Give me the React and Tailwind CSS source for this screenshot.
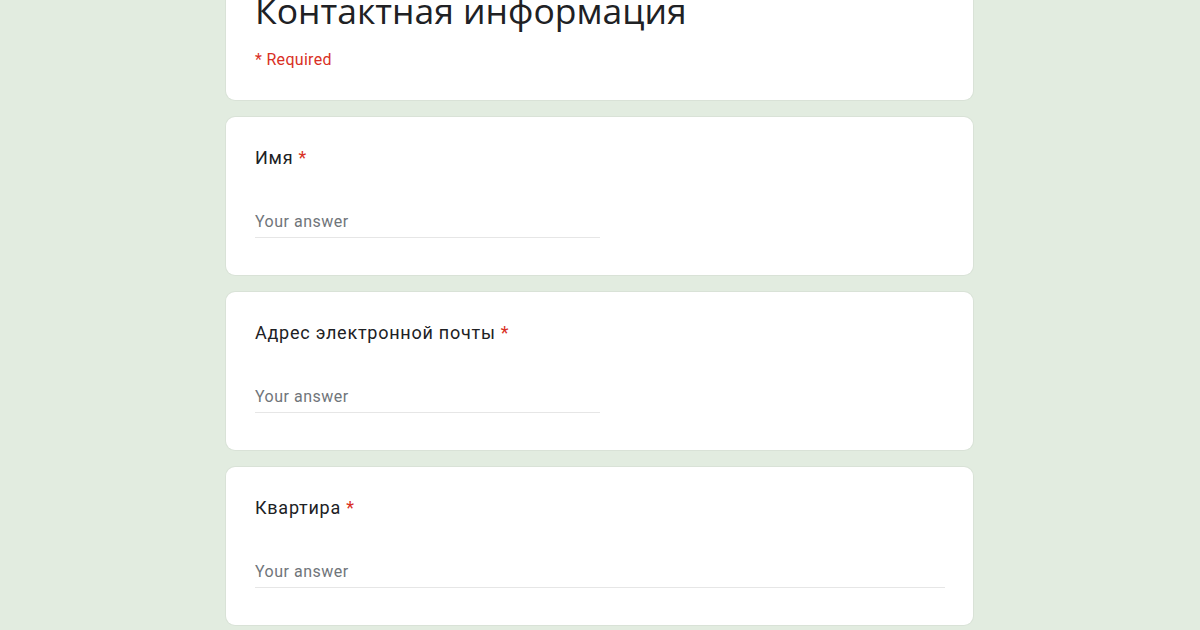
export default function App() {
  const fields = [
    { label: "Имя", full: false },
    { label: "Адрес электронной почты", full: false },
    { label: "Квартира", full: true },
  ];
  return (
    <div className="w-[1200px] h-[630px] overflow-hidden bg-[#e2ece0]" style={{ fontFamily: "Roboto, 'Noto Sans', sans-serif" }}>
      <div className="w-[747px] ml-[226px] -mt-[40px] flex flex-col gap-[17px]">
        <div className="bg-white rounded-[9px] shadow-[0_0_0_1px_rgba(0,0,0,0.04)] pl-[29px] pr-6 pt-[28px] pb-[28px]">
          <div className="text-[35.5px] leading-[44px] text-[#202124]" style={{ fontFamily: "'Open Sans', sans-serif" }}>
            Контактная информация
          </div>
          <div className="mt-[16px] text-[16px] leading-[24px] text-[#d93025] tracking-[0.3px]">* Required</div>
        </div>
        {fields.map((f) => (
          <div key={f.label} className="bg-white rounded-[9px] shadow-[0_0_0_1px_rgba(0,0,0,0.04)] pl-[29px] pr-[28px] pt-[28px] pb-[37px]">
            <div className="text-[18px] leading-[26px] text-[#202124] tracking-[0.75px]">
              {f.label} <span className="text-[#d93025]">*</span>
            </div>
            <div className={`mt-[36px] h-[31px] border-b border-[#e6e6e6] flex items-center text-[16px] text-[#70757a] tracking-[0.5px] ${f.full ? "w-full" : "w-[345px]"}`}>
              Your answer
            </div>
          </div>
        ))}
      </div>
    </div>
  );
}
